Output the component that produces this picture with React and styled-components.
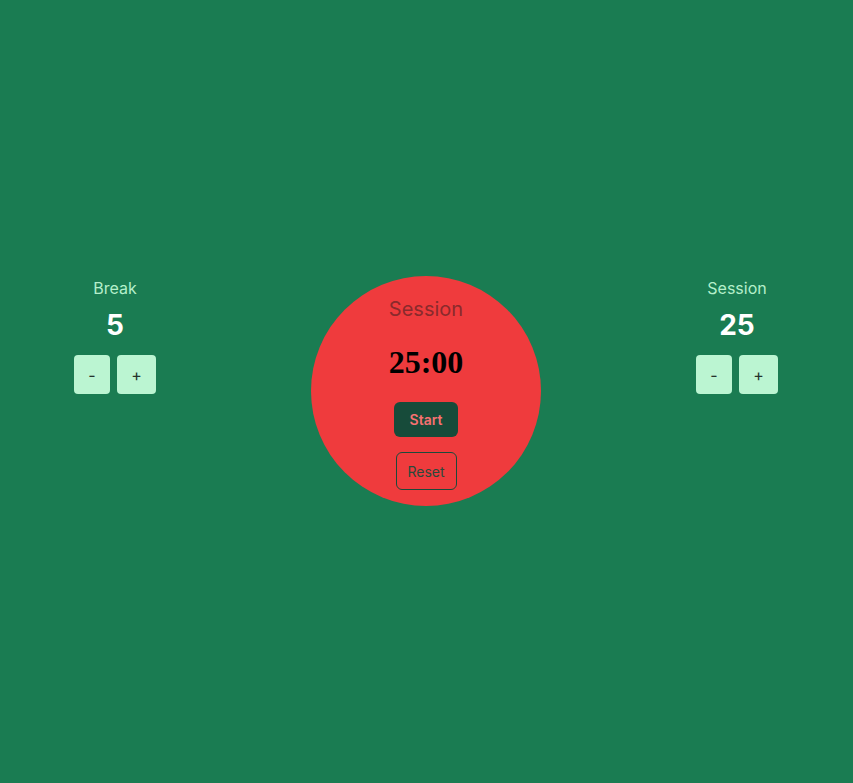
import React, { useState } from "react";
import styled, { createGlobalStyle } from "styled-components";

const GlobalStyle = createGlobalStyle`
  html, body {
    margin: 0;
    padding: 0;
    background: #1a7c52;
    font-family: Inter, "Noto Sans", sans-serif;
  }
`;

const Page = styled.div`
  min-height: 782px;
  display: flex;
  justify-content: space-between;
  align-items: center;
  padding: 0 75px 0 74px;
  box-sizing: border-box;
`;

const Panel = styled.div`
  align-self: center;
  margin-bottom: 112px;
  display: flex;
  flex-direction: column;
  align-items: center;
`;

const Label = styled.p`
  margin: 0;
  font-size: 16px;
  line-height: 24px;
  color: #b4efca;
`;

const Count = styled.p`
  margin: 7px 0 12px;
  font-size: 28px;
  line-height: 36px;
  font-weight: 700;
  color: #ffffff;
`;

const Controls = styled.div`
  display: flex;
  gap: 7px;
`;

const StepButton = styled.button`
  width: ${(p) => p.$w}px;
  height: 39px;
  padding: 0;
  border: none;
  border-radius: 4px;
  background: #bbf5d2;
  color: #26332d;
  font-family: Inter, sans-serif;
  font-size: 16px;
  cursor: pointer;
`;

const Clock = styled.div`
  width: 230px;
  height: 230px;
  border-radius: 50%;
  background: #ef3b3d;
  display: flex;
  flex-direction: column;
  align-items: center;
  padding-top: 19px;
  box-sizing: border-box;
`;

const ClockTitle = styled.p`
  margin: 0;
  font-size: 20px;
  line-height: 28px;
  color: #8a2a2c;
`;

const Time = styled.h1`
  margin: 19px 0 20px;
  font-family: "Liberation Serif", "Times New Roman", serif;
  font-size: 32px;
  line-height: 40px;
  font-weight: 700;
  color: #000;
`;

const ActionButton = styled.button`
  height: ${(p) => (p.$outline ? "38px" : "35px")};
  width: ${(p) => (p.$outline ? "61px" : "64px")};
  margin-top: ${(p) => (p.$outline ? "15px" : "0")};
  padding: 0;
  border-radius: 6px;
  border: ${(p) => (p.$outline ? "1px solid #1b4a3a" : "none")};
  background: ${(p) => (p.$outline ? "transparent" : "#174b3a")};
  color: ${(p) => (p.$outline ? "#2a4a3b" : "#f87171")};
  font-family: Inter, sans-serif;
  font-size: 14px;
  font-weight: ${(p) => (p.$outline ? 400 : 600)};
  cursor: pointer;
`;

const Counter = ({ label, value, onDec, onInc }) => (
  <Panel>
    <Label>{label}</Label>
    <Count>{value}</Count>
    <Controls>
      <StepButton $w={36} onClick={onDec}>-</StepButton>
      <StepButton $w={39} onClick={onInc}>+</StepButton>
    </Controls>
  </Panel>
);

export default function App() {
  const [breakLen, setBreakLen] = useState(5);
  const [sessionLen, setSessionLen] = useState(25);

  return (
    <>
      <GlobalStyle />
      <Page>
        <Counter
          label="Break"
          value={breakLen}
          onDec={() => setBreakLen((v) => Math.max(1, v - 1))}
          onInc={() => setBreakLen((v) => Math.min(60, v + 1))}
        />
        <Clock>
          <ClockTitle>Session</ClockTitle>
          <Time>{String(sessionLen).padStart(2, "0")}:00</Time>
          <ActionButton>Start</ActionButton>
          <ActionButton $outline>Reset</ActionButton>
        </Clock>
        <Counter
          label="Session"
          value={sessionLen}
          onDec={() => setSessionLen((v) => Math.max(1, v - 1))}
          onInc={() => setSessionLen((v) => Math.min(60, v + 1))}
        />
      </Page>
    </>
  );
}
